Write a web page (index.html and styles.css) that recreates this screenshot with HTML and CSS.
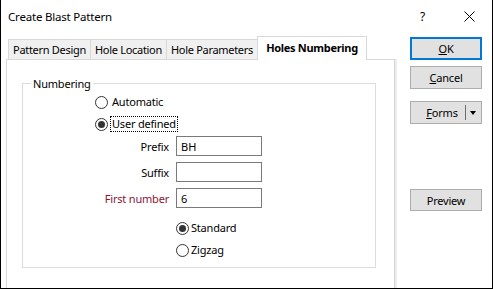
FILE: index.html
```html
<!DOCTYPE html>
<html>
<head>
    <title>Create Blast Pattern</title>
    <link rel="stylesheet" href="styles.css">
</head>
<body>
<div class="window">
    <div class="titlebar">
        <span class="title">Create Blast Pattern</span>
        <span class="help">?</span>
        <span class="close">
            <svg width="11" height="11" viewBox="0 0 11 11"><path d="M0.5 0.5 L10.5 10.5 M10.5 0.5 L0.5 10.5" stroke="#000" stroke-width="1"/></svg>
        </span>
    </div>

    <div class="main">
        <div class="tabs-area">
            <div class="tabstrip">
                <div class="tab t1">Pattern Design</div>
                <div class="tab t2">Hole Location</div>
                <div class="tab t3">Hole Parameters</div>
                <div class="tab active">Holes Numbering</div>
            </div>
            <div class="panel">
                <fieldset class="group">
                    <legend>Numbering</legend>

                    <div class="radio-row top">
                        <span class="radio"></span><span class="rlabel">Automatic</span>
                    </div>
                    <div class="radio-row top">
                        <span class="radio checked"></span><span class="rlabel focus">User defined</span>
                    </div>

                    <div class="field-row first">
                        <label for="prefix">Prefix</label>
                        <input type="text" id="prefix" value="BH">
                    </div>
                    <div class="field-row">
                        <label for="suffix">Suffix</label>
                        <input type="text" id="suffix" value="">
                    </div>
                    <div class="field-row">
                        <label for="firstNumber" class="required">First number</label>
                        <input type="text" id="firstNumber" value="6">
                    </div>

                    <div class="radio-row bottom first-bottom">
                        <span class="radio checked"></span><span class="rlabel">Standard</span>
                    </div>
                    <div class="radio-row bottom">
                        <span class="radio"></span><span class="rlabel">Zigzag</span>
                    </div>
                </fieldset>
            </div>
        </div>

        <div class="buttons">
            <div class="btn default"><span><u>O</u>K</span></div>
            <div class="btn cancel"><span><u>C</u>ancel</span></div>
            <div class="btn forms">
                <span class="forms-text"><u>F</u>orms</span>
                <span class="sep"></span>
                <span class="arrow"></span>
            </div>
            <div class="btn preview"><span>Preview</span></div>
        </div>
    </div>
</div>
</body>
</html>
```

FILE: styles.css
```css
body {
    margin: 0;
    font-family: "Noto Sans", "Liberation Sans", sans-serif;
    font-size: 11px;
    letter-spacing: -0.2px;
    color: #000;
}

.window {
    width: 493px;
    height: 289px;
    box-sizing: border-box;
    border: 1px solid #000;
    border-top: none;
    background: #fff;
    display: flex;
    flex-direction: column;
    overflow: hidden;
}

/* title bar */
.titlebar {
    height: 36px;
    display: flex;
    align-items: center;
    padding-left: 7px;
    padding-bottom: 4px;
    box-sizing: border-box;
}
.title {
    font-size: 11.5px;
    flex: 1;
}
.help {
    font-size: 12px;
    width: 8px;
    margin-right: 36px;
}
.close {
    width: 11px;
    height: 11px;
    margin-right: 17px;
    display: flex;
}

.main {
    flex: 1;
    display: flex;
}

/* tabs */
.tabs-area {
    margin-left: 5px;
    width: 389px;
    display: flex;
    flex-direction: column;
}
.tabstrip {
    height: 23px;
    display: flex;
    align-items: flex-end;
    padding-left: 2px;
}
.tab {
    height: 20px;
    box-sizing: border-box;
    background: #f0f0f0;
    border-left: 1px solid #d9d9d9;
    border-top: 1px solid #d9d9d9;
    display: flex;
    align-items: center;
    justify-content: center;
    white-space: nowrap;
    letter-spacing: -0.3px;
}
.t1 { width: 82px; }
.t2 { width: 76px; }
.t3 { width: 91px; }
.tab.active {
    position: relative;
    z-index: 1;
    width: 110px;
    height: 24px;
    margin-bottom: -1px;
    background: #fff;
    border-right: 1px solid #d9d9d9;
    font-weight: bold;
    padding-bottom: 3px;
}

.panel {
    flex: 1;
    border: 1px solid #d9d9d9;
    border-bottom: none;
    border-right: 1px solid #d4d4d4;
    box-shadow: 2px 0 0 #ececec;
}

/* group box */
.group {
    margin: 16px 0 0 15px;
    padding: 0;
    width: 354px;
    height: 192px;
    box-sizing: border-box;
    border: 1px solid #dcdcdc;
}
.group legend {
    margin-left: 8px;
    padding: 0 2px;
    line-height: 15px;
}

.radio-row {
    height: 22px;
    display: flex;
    align-items: center;
}
.radio-row.top { padding-left: 72px; }
.radio-row.bottom { padding-left: 153px; }
.radio-row.first-bottom { margin-top: 9px; }

.radio {
    width: 13px;
    height: 13px;
    box-sizing: border-box;
    border: 1px solid #333;
    border-radius: 50%;
    display: flex;
    align-items: center;
    justify-content: center;
}
.radio.checked::after {
    content: "";
    width: 7px;
    height: 7px;
    border-radius: 50%;
    background: #333;
}
.rlabel {
    margin-left: 3px;
    padding: 0 1px;
    line-height: 14px;
    border: 1px dotted transparent;
}
.top .rlabel { margin-left: 2px; }
.rlabel.focus {
    border-color: #000;
}
.bottom .rlabel { margin-left: 2px; padding: 0; border: none; }

.field-row {
    height: 20px;
    margin-top: 6px;
    display: flex;
    align-items: center;
}
.field-row.first { margin-top: 1px; }
.field-row label {
    width: 146px;
    text-align: right;
    margin-right: 7px;
}
.field-row .required {
    color: #8b1538;
}
.field-row input {
    width: 86px;
    height: 20px;
    box-sizing: border-box;
    border: 1px solid #7a7a7a;
    padding: 0 4px;
    font-family: inherit;
    font-size: 11px;
    outline: none;
}

/* right buttons */
.buttons {
    margin-left: 15px;
    padding-top: 1px;
    width: 72px;
    display: flex;
    flex-direction: column;
}
.btn {
    height: 23px;
    box-sizing: border-box;
    background: #e1e1e1;
    border: 1px solid #adadad;
    display: flex;
    align-items: center;
    justify-content: center;
}
.btn.default { border: 2px solid #0078d7; }
.btn.cancel { margin-top: 6px; }
.btn.forms { margin-top: 12px; padding-right: 5px; }
.btn.preview { margin-top: 65px; height: 22px; }

.forms-text {
    flex: 1;
    text-align: center;
    padding-left: 8px;
}
.sep {
    width: 1px;
    height: 15px;
    background: #6d6d6d;
    margin-right: 4px;
}
.arrow {
    width: 0;
    height: 0;
    border-left: 3.5px solid transparent;
    border-right: 3.5px solid transparent;
    border-top: 4px solid #000;
}
```
